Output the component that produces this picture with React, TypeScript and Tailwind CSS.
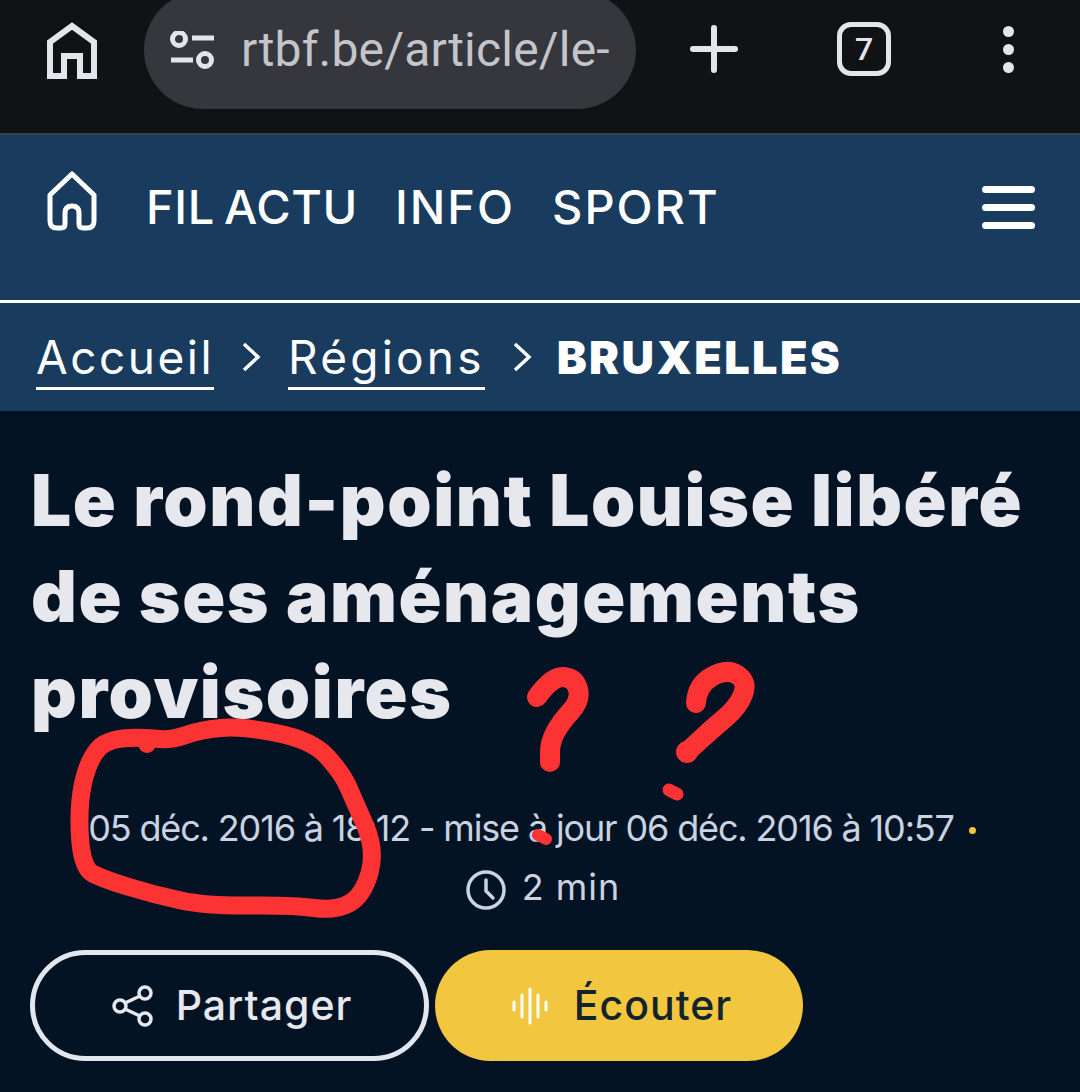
const heading = '"Inter", "Liberation Sans", sans-serif';

type Pt = [number, number];

// rounded line through a list of points, using the midpoints as joins
function smooth(points: Pt[]) {
  let d = `M${points[0][0]} ${points[0][1]}`;
  for (let i = 1; i < points.length - 1; i++) {
    const [x, y] = points[i];
    const [nx, ny] = points[i + 1];
    d += ` Q${x} ${y} ${(x + nx) / 2} ${(y + ny) / 2}`;
  }
  const last = points[points.length - 1];
  return d + ` L${last[0]} ${last[1]}`;
}

const ring: Pt[] = [
  [147, 738], [110, 736], [88, 760], [78, 807], [82, 868], [103, 879], [155, 895], [207, 906],
  [293, 905], [335, 911], [363, 896], [376, 850], [354, 800], [342, 773], [312, 740], [241, 726],
  [200, 730], [172, 740], [147, 738],
];
const firstMark: Pt[] = [[537, 697], [552, 676], [575, 678], [581, 700], [561, 722], [550, 742], [550, 762]];
const secondMark: Pt[] = [[696, 703], [697, 685], [727, 668], [748, 682], [738, 707], [712, 729], [687, 752]];

function Scribbles() {
  return (
    <svg className="absolute left-0 top-0 pointer-events-none" width="1080" height="1092" viewBox="0 0 1080 1092" fill="none" stroke="#fb3333" strokeLinecap="round" strokeLinejoin="round">
      <path strokeWidth="18" d={smooth(ring)} />
      <circle cx="147" cy="744" r="9" fill="#fb3333" stroke="none" />
      <path strokeWidth="20" d={smooth(firstMark)} />
      <circle cx="550" cy="761" r="10" fill="#fb3333" stroke="none" />
      <path strokeWidth="20" d={smooth(secondMark)} />
      <circle cx="687" cy="752" r="11" fill="#fb3333" stroke="none" />
      <path strokeWidth="13" d="M669 790 L677 794" />
      <path strokeWidth="12" d="M538 835 L546 839" />
    </svg>
  );
}

function BrowserBar() {
  return (
    <div className="flex h-[133px] items-start bg-[#111216] text-[#e4e5ea]">
      <div className="flex w-[144px] shrink-0 justify-center pt-[22px]">
        <svg width="50" height="58" viewBox="0 0 50 58" fill="none" stroke="currentColor" strokeWidth="6">
          <path d="M3 54 V20 L25 4 L47 20 V54 H33 V34 H17 V54 Z" />
        </svg>
      </div>
      <div className="-mt-[9px] flex h-[118px] w-[492px] shrink-0 items-center rounded-full bg-[#36373c] pl-[26px]">
        <svg className="shrink-0" width="46" height="38" viewBox="0 0 46 38" fill="none" stroke="currentColor" strokeWidth="5">
          <circle cx="9" cy="8" r="6.5" />
          <path d="M22 7 H44" />
          <path d="M1 29 H23" />
          <circle cx="35" cy="29" r="6.5" />
        </svg>
        <span className="ml-[25px] text-[48px] leading-none tracking-[0.2px] text-[#c4c5ca]" style={{ fontFamily: '"Roboto", sans-serif' }}>rtbf.be/article/le-</span>
      </div>
      <div className="flex flex-1 items-center pt-[22px]">
        <svg className="ml-[54px]" width="48" height="48" viewBox="0 0 48 48" stroke="currentColor" strokeWidth="6" strokeLinecap="round">
          <path d="M24 3 V45" />
          <path d="M3 24 H45" />
        </svg>
        <div className="ml-[99px] flex h-[54px] w-[54px] items-center justify-center rounded-[14px] border-[5px] border-[#e4e5ea] text-[32px] font-medium leading-none" style={{ fontFamily: '"Roboto", sans-serif' }}>7</div>
        <div className="ml-[112px] flex flex-col gap-[7px]">
          <span className="h-[11px] w-[11px] rounded-full bg-[#e4e5ea]" />
          <span className="h-[11px] w-[11px] rounded-full bg-[#e4e5ea]" />
          <span className="h-[11px] w-[11px] rounded-full bg-[#e4e5ea]" />
        </div>
      </div>
    </div>
  );
}

function SiteNav() {
  return (
    <nav className="flex h-[167px] items-start border-t-2 border-[#3a4048] bg-[#183b5e] pl-[47px] pr-[45px] pt-[38px] text-white">
      <svg className="mt-[-2px] shrink-0" width="50" height="60" viewBox="0 0 50 60" fill="none" stroke="currentColor" strokeWidth="5" strokeLinejoin="round">
        <path d="M3 24 L25 3 L47 24 V50 Q47 57 40 57 H36 Q32 57 32 53 V42 Q32 35 25 35 Q18 35 18 42 V53 Q18 57 14 57 H10 Q3 57 3 50 Z" />
      </svg>
      <div className="ml-[49px] flex gap-[37px] text-[47px] font-medium leading-[68px]" style={{ fontFamily: heading }}>
        <span className="tracking-[0.6px] [word-spacing:-4px]">FIL ACTU</span>
        <span className="tracking-[2px]">INFO</span>
        <span className="tracking-[2px]">SPORT</span>
      </div>
      <div className="ml-auto mt-[13px] flex w-[53px] flex-col gap-[11px]">
        <span className="h-[7px] rounded-full bg-white" />
        <span className="h-[7px] rounded-full bg-white" />
        <span className="h-[7px] rounded-full bg-white" />
      </div>
    </nav>
  );
}

function Chevron() {
  return (
    <svg width="20" height="32" viewBox="0 0 20 32" fill="none" stroke="white" strokeWidth="3.5">
      <path d="M3 3 L17 16 L3 29" />
    </svg>
  );
}

function Breadcrumb() {
  return (
    <div className="flex h-[111px] items-center gap-[27px] border-t-[3px] border-white bg-[#183b5e] pl-[36px] text-white" style={{ fontFamily: heading }}>
      <a className="mt-[6px] border-b-[3px] border-white pb-[3px] text-[46px] leading-[54px] tracking-[2.5px]">Accueil</a>
      <Chevron />
      <a className="mt-[6px] border-b-[3px] border-white pb-[3px] text-[46px] leading-[54px] tracking-[3.2px]">Régions</a>
      <Chevron />
      <span className="-ml-[2px] text-[45px] font-black leading-none tracking-[2.4px]">BRUXELLES</span>
    </div>
  );
}

function Article() {
  return (
    <main className="h-[681px] bg-[#031324] pt-[41px]" style={{ fontFamily: heading }}>
      <h1 className="pl-[31px] text-[71px] font-black leading-[96px] tracking-[1.6px] text-[#e6e8ee]">
        Le rond-point Louise libéré<br />de ses aménagements<br />provisoires
      </h1>
      <div className="mt-[59px] flex items-center justify-center pr-[16px] text-[36px] leading-[59px] tracking-[-1.15px] text-[#c9d3e2]">
        <span>05 déc. 2016 à 18:12 - mise à jour 06 déc. 2016 à 10:57</span>
        <span className="ml-[15px] mt-[4px] h-[7px] w-[7px] rounded-full bg-[#f3c640]" />
      </div>
      <div className="flex items-center justify-center pl-[6px] text-[36px] leading-[59px] tracking-[1px] text-[#c9d3e2]">
        <svg className="mr-[16px] mt-[4px]" width="40" height="40" viewBox="0 0 40 40" fill="none" stroke="currentColor" strokeWidth="3.5" strokeLinecap="round">
          <circle cx="20" cy="20" r="18" />
          <path d="M20 10 V21 L27 28" />
        </svg>
        <span>2 min</span>
      </div>
      <div className="mt-[33px] flex gap-[6px] pl-[30px]">
        <button className="flex h-[111px] w-[399px] items-center justify-center gap-[22px] rounded-full border-[5px] border-[#e2e6ee] pl-[5px] text-[41px] font-medium tracking-[1px] text-[#e6e8ee]">
          <svg width="42" height="42" viewBox="0 0 42 42" fill="none" stroke="currentColor" strokeWidth="3.5">
            <circle cx="8" cy="21" r="6" />
            <circle cx="33" cy="8" r="6" />
            <circle cx="33" cy="34" r="6" />
            <path d="M13 18 L28 11" />
            <path d="M13 24 L28 31" />
          </svg>
          Partager
        </button>
        <button className="flex h-[111px] w-[368px] items-center justify-center gap-[25px] rounded-full bg-[#f3c640] pl-[5px] text-[41px] font-medium tracking-[1px] text-[#14242c]">
          <svg width="38" height="38" viewBox="0 0 38 38" stroke="white" strokeWidth="3" strokeLinecap="round">
            <path d="M3 15 V23" />
            <path d="M11 8 V30" />
            <path d="M19 2 V36" />
            <path d="M27 8 V30" />
            <path d="M35 15 V23" />
          </svg>
          Écouter
        </button>
      </div>
    </main>
  );
}

export default function App() {
  return (
    <div className="relative h-[1092px] w-[1080px] overflow-hidden">
      <BrowserBar />
      <SiteNav />
      <Breadcrumb />
      <Article />
      <Scribbles />
    </div>
  );
}
